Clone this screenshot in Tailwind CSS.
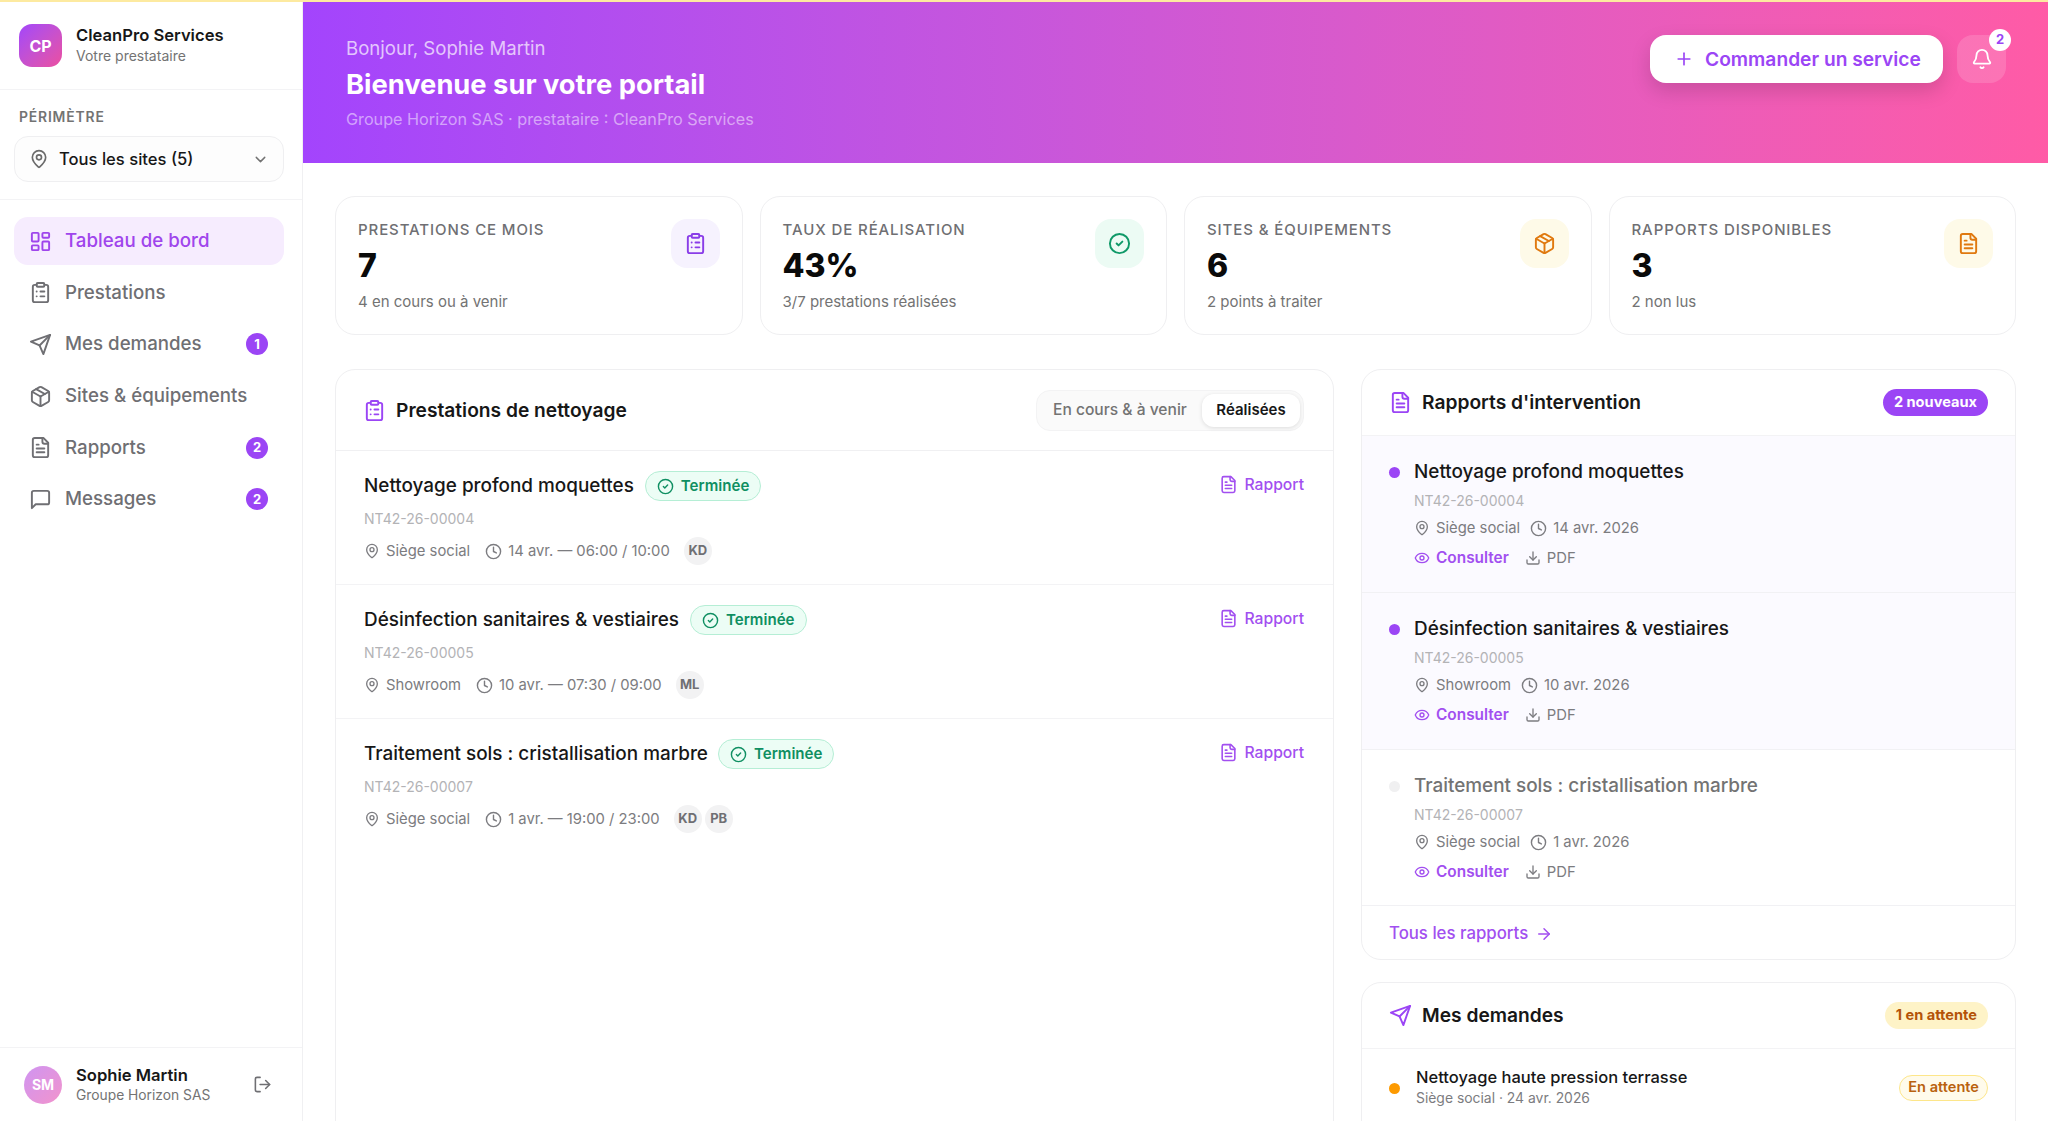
<!DOCTYPE html>
<html lang="fr">
<head>
  <meta charset="UTF-8" />
  <title>CleanPro Services | Portail client</title>
  <script src="https://cdn.jsdelivr.net/npm/@tailwindcss/browser@4"></script>
</head>
<body class="h-screen overflow-hidden bg-white font-[family-name:Inter,sans-serif] text-[#171717] flex flex-col">

  <!-- Icons -->
  <svg class="hidden">
    <symbol id="i-dashboard" viewBox="0 0 24 24" fill="none" stroke="currentColor" stroke-width="2" stroke-linecap="round" stroke-linejoin="round"><rect width="7" height="9" x="3" y="3" rx="1"/><rect width="7" height="5" x="14" y="3" rx="1"/><rect width="7" height="9" x="14" y="12" rx="1"/><rect width="7" height="5" x="3" y="16" rx="1"/></symbol>
    <symbol id="i-clipboard" viewBox="0 0 24 24" fill="none" stroke="currentColor" stroke-width="2" stroke-linecap="round" stroke-linejoin="round"><rect width="8" height="4" x="8" y="2" rx="1"/><path d="M16 4h2a2 2 0 0 1 2 2v14a2 2 0 0 1-2 2H6a2 2 0 0 1-2-2V6a2 2 0 0 1 2-2h2"/><path d="M12 11h4"/><path d="M12 16h4"/><path d="M8 11h.01"/><path d="M8 16h.01"/></symbol>
    <symbol id="i-send" viewBox="0 0 24 24" fill="none" stroke="currentColor" stroke-width="2" stroke-linecap="round" stroke-linejoin="round"><path d="m22 2-7 20-4-9-9-4Z"/><path d="M22 2 11 13"/></symbol>
    <symbol id="i-package" viewBox="0 0 24 24" fill="none" stroke="currentColor" stroke-width="2" stroke-linecap="round" stroke-linejoin="round"><path d="m7.5 4.27 9 5.15"/><path d="M21 8a2 2 0 0 0-1-1.73l-7-4a2 2 0 0 0-2 0l-7 4A2 2 0 0 0 3 8v8a2 2 0 0 0 1 1.73l7 4a2 2 0 0 0 2 0l7-4A2 2 0 0 0 21 16Z"/><path d="m3.3 7 8.7 5 8.7-5"/><path d="M12 22V12"/></symbol>
    <symbol id="i-file" viewBox="0 0 24 24" fill="none" stroke="currentColor" stroke-width="2" stroke-linecap="round" stroke-linejoin="round"><path d="M15 2H6a2 2 0 0 0-2 2v16a2 2 0 0 0 2 2h12a2 2 0 0 0 2-2V7Z"/><path d="M14 2v4a2 2 0 0 0 2 2h4"/><path d="M10 9H8"/><path d="M16 13H8"/><path d="M16 17H8"/></symbol>
    <symbol id="i-message" viewBox="0 0 24 24" fill="none" stroke="currentColor" stroke-width="2" stroke-linecap="round" stroke-linejoin="round"><path d="M21 15a2 2 0 0 1-2 2H7l-4 4V5a2 2 0 0 1 2-2h14a2 2 0 0 1 2 2z"/></symbol>
    <symbol id="i-pin" viewBox="0 0 24 24" fill="none" stroke="currentColor" stroke-width="2" stroke-linecap="round" stroke-linejoin="round"><path d="M20 10c0 4.993-5.539 10.193-7.399 11.799a1 1 0 0 1-1.202 0C9.539 20.193 4 14.993 4 10a8 8 0 0 1 16 0"/><circle cx="12" cy="10" r="3"/></symbol>
    <symbol id="i-chevron" viewBox="0 0 24 24" fill="none" stroke="currentColor" stroke-width="2" stroke-linecap="round" stroke-linejoin="round"><path d="m6 9 6 6 6-6"/></symbol>
    <symbol id="i-plus" viewBox="0 0 24 24" fill="none" stroke="currentColor" stroke-width="2" stroke-linecap="round" stroke-linejoin="round"><path d="M5 12h14"/><path d="M12 5v14"/></symbol>
    <symbol id="i-bell" viewBox="0 0 24 24" fill="none" stroke="currentColor" stroke-width="2" stroke-linecap="round" stroke-linejoin="round"><path d="M10.268 21a2 2 0 0 0 3.464 0"/><path d="M3.262 15.326A1 1 0 0 0 4 17h16a1 1 0 0 0 .74-1.673C19.41 13.956 18 12.499 18 8A6 6 0 0 0 6 8c0 4.499-1.411 5.956-2.738 7.326"/></symbol>
    <symbol id="i-check" viewBox="0 0 24 24" fill="none" stroke="currentColor" stroke-width="2" stroke-linecap="round" stroke-linejoin="round"><circle cx="12" cy="12" r="10"/><path d="m9 12 2 2 4-4"/></symbol>
    <symbol id="i-clock" viewBox="0 0 24 24" fill="none" stroke="currentColor" stroke-width="2" stroke-linecap="round" stroke-linejoin="round"><circle cx="12" cy="12" r="10"/><polyline points="12 6 12 12 16 14"/></symbol>
    <symbol id="i-eye" viewBox="0 0 24 24" fill="none" stroke="currentColor" stroke-width="2" stroke-linecap="round" stroke-linejoin="round"><path d="M2.062 12.348a1 1 0 0 1 0-.696 10.75 10.75 0 0 1 19.876 0 1 1 0 0 1 0 .696 10.75 10.75 0 0 1-19.876 0"/><circle cx="12" cy="12" r="3"/></symbol>
    <symbol id="i-download" viewBox="0 0 24 24" fill="none" stroke="currentColor" stroke-width="2" stroke-linecap="round" stroke-linejoin="round"><path d="M21 15v4a2 2 0 0 1-2 2H5a2 2 0 0 1-2-2v-4"/><polyline points="7 10 12 15 17 10"/><line x1="12" x2="12" y1="15" y2="3"/></symbol>
    <symbol id="i-arrow" viewBox="0 0 24 24" fill="none" stroke="currentColor" stroke-width="2" stroke-linecap="round" stroke-linejoin="round"><path d="M5 12h14"/><path d="m12 5 7 7-7 7"/></symbol>
    <symbol id="i-logout" viewBox="0 0 24 24" fill="none" stroke="currentColor" stroke-width="2" stroke-linecap="round" stroke-linejoin="round"><path d="M9 21H5a2 2 0 0 1-2-2V5a2 2 0 0 1 2-2h4"/><polyline points="16 17 21 12 16 7"/><line x1="21" x2="9" y1="12" y2="12"/></symbol>
  </svg>

  <!-- Top strip -->
  <div class="h-[2px] shrink-0 bg-[#fdeaa0]"></div>

  <div class="flex flex-1 min-h-0">

    <!-- Sidebar -->
    <aside class="w-[303px] shrink-0 border-r border-[#f0f0f2] flex flex-col">
      <div class="h-[88px] shrink-0 border-b border-[#f3f3f5] pl-[19px] pt-[22px] flex items-start gap-[14px]">
        <div class="w-[43px] h-[43px] rounded-[13px] bg-linear-to-br from-[#a344fb] to-[#ec4d9f] flex items-center justify-center text-white font-bold text-[16px]">CP</div>
        <div>
          <div class="text-[16.6px] leading-[22px] font-semibold">CleanPro Services</div>
          <div class="text-[14px] leading-[20px] text-[#737373]">Votre prestataire</div>
        </div>
      </div>

      <div class="h-[110px] shrink-0 border-b border-[#f3f3f5] pl-[14px] pr-[18px] pt-[18px]">
        <div class="px-[5px] text-[13.9px] leading-[18px] font-semibold tracking-[0.06em] text-[#737373]">PÉRIMÈTRE</div>
        <div class="mt-[10px] h-[46px] rounded-[14px] border border-[#efeff1] bg-[#fdfdfd] pl-[14px] pr-[14px] flex items-center text-[16.6px] font-medium">
          <svg class="w-[20px] h-[20px] text-[#6b6b6b]"><use href="#i-pin"/></svg>
          <span class="ml-[10px] flex-1">Tous les sites (5)</span>
          <svg class="w-[17px] h-[17px] text-[#737373]"><use href="#i-chevron"/></svg>
        </div>
      </div>

      <nav class="flex-1 pl-[14px] pr-[18px] pt-[17px] flex flex-col gap-[3.7px] text-[18.7px] font-medium text-[#6f6f73]">
        <a class="h-[48px] rounded-[14px] bg-[#f6ecfe] text-[#9f45ec] pl-[15px] flex items-center gap-[13px]">
          <svg class="w-[23px] h-[23px]"><use href="#i-dashboard"/></svg>Tableau de bord
        </a>
        <a class="h-[48px] pl-[15px] pr-[16px] flex items-center gap-[13px]">
          <svg class="w-[23px] h-[23px]"><use href="#i-clipboard"/></svg>Prestations
        </a>
        <a class="h-[48px] pl-[15px] pr-[16px] flex items-center gap-[13px]">
          <svg class="w-[23px] h-[23px]"><use href="#i-send"/></svg><span class="flex-1">Mes demandes</span>
          <span class="w-[22px] h-[22px] rounded-full bg-[#9b45f5] text-white text-[13px] font-bold flex items-center justify-center">1</span>
        </a>
        <a class="h-[48px] pl-[15px] pr-[16px] flex items-center gap-[13px]">
          <svg class="w-[23px] h-[23px]"><use href="#i-package"/></svg>Sites &amp; équipements
        </a>
        <a class="h-[48px] pl-[15px] pr-[16px] flex items-center gap-[13px]">
          <svg class="w-[23px] h-[23px]"><use href="#i-file"/></svg><span class="flex-1">Rapports</span>
          <span class="w-[22px] h-[22px] rounded-full bg-[#9b45f5] text-white text-[13px] font-bold flex items-center justify-center">2</span>
        </a>
        <a class="h-[48px] pl-[15px] pr-[16px] flex items-center gap-[13px]">
          <svg class="w-[23px] h-[23px]"><use href="#i-message"/></svg><span class="flex-1">Messages</span>
          <span class="w-[22px] h-[22px] rounded-full bg-[#9b45f5] text-white text-[13px] font-bold flex items-center justify-center">2</span>
        </a>
      </nav>

      <div class="h-[74px] shrink-0 border-t border-[#f3f3f5] pl-[24px] pr-[30px] flex items-center">
        <div class="w-[38px] h-[38px] rounded-full bg-linear-to-br from-[#cf94f2] to-[#f293cb] text-white font-bold text-[14px] flex items-center justify-center">SM</div>
        <div class="ml-[14px] flex-1">
          <div class="text-[16.6px] leading-[21px] font-semibold">Sophie Martin</div>
          <div class="text-[13.8px] leading-[18px] text-[#737373]">Groupe Horizon SAS</div>
        </div>
        <svg class="w-[19px] h-[19px] text-[#6f6f73]"><use href="#i-logout"/></svg>
      </div>
    </aside>

    <!-- Main -->
    <main class="flex-1 min-w-0 overflow-hidden">
      <header class="h-[161px] -ml-px bg-linear-to-r from-[#a344fd] to-[#ff5ba6] pl-[44px] pr-[42px] flex items-start justify-between">
        <div class="pt-[33px]">
          <div class="text-[18.6px] leading-[26px] text-white/70">Bonjour, Sophie Martin</div>
          <h1 class="mt-[6px] text-[27.3px] leading-[36px] font-bold text-white">Bienvenue sur votre portail</h1>
          <div class="mt-[5px] text-[16.2px] leading-[22px] text-white/50">Groupe Horizon SAS · prestataire : CleanPro Services</div>
        </div>
        <div class="pt-[33px] flex items-center gap-[14px]">
          <button class="h-[48px] w-[293px] pl-[24px] rounded-[16px] bg-white text-[#9b45f5] shadow-[0_8px_20px_rgba(0,0,0,0.15)] text-[19.2px] font-semibold flex items-center gap-[11px]">
            <svg class="w-[20px] h-[20px]"><use href="#i-plus"/></svg>Commander un service
          </button>
          <div class="relative w-[49px] h-[48px] rounded-[16px] bg-white/15 flex items-center justify-center text-white">
            <svg class="w-[22px] h-[22px]"><use href="#i-bell"/></svg>
            <span class="absolute -top-[6px] -right-[5px] w-[22px] h-[22px] rounded-full bg-white text-[#9b45f5] text-[13px] font-bold flex items-center justify-center">2</span>
          </div>
        </div>
      </header>

      <div class="pl-[32px] pr-[32px] pt-[33px]">
        <!-- Stats -->
        <section class="grid grid-cols-4 gap-[17px]">
          <div class="h-[139px] rounded-[20px] border border-[#efeff1] pl-[22px] pr-[22px] pt-[22px] flex justify-between">
            <div>
              <div class="text-[15px] leading-[22px] font-medium tracking-[0.06em] text-[#6f6f73]">PRESTATIONS CE MOIS</div>
              <div class="mt-[3px] text-[32px] leading-[44px] font-extrabold text-[#0a0a0a]">7</div>
              <div class="mt-[3px] text-[15px] leading-[22px] text-[#737373]">4 en cours ou à venir</div>
            </div>
            <div class="w-[49px] h-[49px] rounded-[16px] bg-[#f6f2fe] text-[#8a3de8] flex items-center justify-center"><svg class="w-[23px] h-[23px]"><use href="#i-clipboard"/></svg></div>
          </div>
          <div class="h-[139px] rounded-[20px] border border-[#efeff1] pl-[22px] pr-[22px] pt-[22px] flex justify-between">
            <div>
              <div class="text-[15px] leading-[22px] font-medium tracking-[0.06em] text-[#6f6f73]">TAUX DE RÉALISATION</div>
              <div class="mt-[3px] text-[32px] leading-[44px] font-extrabold text-[#0a0a0a]">43%</div>
              <div class="mt-[3px] text-[15px] leading-[22px] text-[#737373]">3/7 prestations réalisées</div>
            </div>
            <div class="w-[49px] h-[49px] rounded-[16px] bg-[#ecfbf4] text-[#0f9968] flex items-center justify-center"><svg class="w-[23px] h-[23px]"><use href="#i-check"/></svg></div>
          </div>
          <div class="h-[139px] rounded-[20px] border border-[#efeff1] pl-[22px] pr-[22px] pt-[22px] flex justify-between">
            <div>
              <div class="text-[15px] leading-[22px] font-medium tracking-[0.06em] text-[#6f6f73]">SITES &amp; ÉQUIPEMENTS</div>
              <div class="mt-[3px] text-[32px] leading-[44px] font-extrabold text-[#0a0a0a]">6</div>
              <div class="mt-[3px] text-[15px] leading-[22px] text-[#737373]">2 points à traiter</div>
            </div>
            <div class="w-[49px] h-[49px] rounded-[16px] bg-[#fefae8] text-[#e0790f] flex items-center justify-center"><svg class="w-[23px] h-[23px]"><use href="#i-package"/></svg></div>
          </div>
          <div class="h-[139px] rounded-[20px] border border-[#efeff1] pl-[22px] pr-[22px] pt-[22px] flex justify-between">
            <div>
              <div class="text-[15px] leading-[22px] font-medium tracking-[0.06em] text-[#6f6f73]">RAPPORTS DISPONIBLES</div>
              <div class="mt-[3px] text-[32px] leading-[44px] font-extrabold text-[#0a0a0a]">3</div>
              <div class="mt-[3px] text-[15px] leading-[22px] text-[#737373]">2 non lus</div>
            </div>
            <div class="w-[49px] h-[49px] rounded-[16px] bg-[#fefae8] text-[#e0790f] flex items-center justify-center"><svg class="w-[23px] h-[23px]"><use href="#i-file"/></svg></div>
          </div>
        </section>

        <div class="mt-[34px] grid grid-cols-[999px_655px] gap-[27px] items-start">

          <!-- Prestations -->
          <section class="h-[900px] rounded-[20px] border border-[#efeff1]">
            <div class="h-[81px] border-b border-[#f0f0f2] pl-[27px] pr-[29px] flex items-center">
              <svg class="w-[23px] h-[23px] text-[#9b45f5]"><use href="#i-clipboard"/></svg>
              <h2 class="ml-[10px] flex-1 text-[19.2px] font-semibold">Prestations de nettoyage</h2>
              <div class="h-[41px] w-[268px] rounded-[14px] bg-[#fafafa] border border-[#f3f3f4] pl-[16px] pr-[3px] flex items-center justify-between text-[15.6px] font-medium">
                <span class="text-[#737373]">En cours &amp; à venir</span>
                <span class="h-[33px] w-[98px] rounded-[12px] bg-white shadow-[0_1px_4px_rgba(0,0,0,0.12)] text-[15px] font-semibold flex items-center justify-center">Réalisées</span>
              </div>
            </div>

            <div class="h-[134px] border-b border-[#f3f3f5] pl-[28px] pr-[29px] pt-[20px] flex items-start justify-between">
              <div>
                <div class="flex items-center gap-[11px]">
                  <span class="text-[18.9px] leading-[30px] font-medium">Nettoyage profond moquettes</span>
                  <span class="h-[30px] px-[11px] rounded-full border border-[#b5eed5] bg-[#ecfdf5] text-[#0f8f62] text-[15.1px] font-semibold flex items-center gap-[7px]"><svg class="w-[17px] h-[17px]"><use href="#i-check"/></svg>Terminée</span>
                </div>
                <div class="mt-[8px] text-[14px] leading-[20px] text-[#b3b3b6]">NT42-26-00004</div>
                <div class="mt-[8px] flex items-center text-[14.8px] text-[#7c7c80]">
                  <svg class="w-[16px] h-[16px]"><use href="#i-pin"/></svg><span class="ml-[6px]">Siège social</span>
                  <svg class="ml-[15px] w-[17px] h-[17px]"><use href="#i-clock"/></svg><span class="ml-[6px]">14 avr. — 06:00 / 10:00</span>
                  <span class="ml-[14px] w-[28px] h-[28px] rounded-full bg-[#f2f2f3] text-[#6f6f73] text-[13px] font-bold flex items-center justify-center">KD</span>
                </div>
              </div>
              <a class="mt-[2px] flex items-center gap-[6px] text-[15.7px] font-medium text-[#a24ff0]"><svg class="w-[19px] h-[19px]"><use href="#i-file"/></svg>Rapport</a>
            </div>

            <div class="h-[134px] border-b border-[#f3f3f5] pl-[28px] pr-[29px] pt-[20px] flex items-start justify-between">
              <div>
                <div class="flex items-center gap-[11px]">
                  <span class="text-[18.9px] leading-[30px] font-medium">Désinfection sanitaires &amp; vestiaires</span>
                  <span class="h-[30px] px-[11px] rounded-full border border-[#b5eed5] bg-[#ecfdf5] text-[#0f8f62] text-[15.1px] font-semibold flex items-center gap-[7px]"><svg class="w-[17px] h-[17px]"><use href="#i-check"/></svg>Terminée</span>
                </div>
                <div class="mt-[8px] text-[14px] leading-[20px] text-[#b3b3b6]">NT42-26-00005</div>
                <div class="mt-[8px] flex items-center text-[14.8px] text-[#7c7c80]">
                  <svg class="w-[16px] h-[16px]"><use href="#i-pin"/></svg><span class="ml-[6px]">Showroom</span>
                  <svg class="ml-[15px] w-[17px] h-[17px]"><use href="#i-clock"/></svg><span class="ml-[6px]">10 avr. — 07:30 / 09:00</span>
                  <span class="ml-[14px] w-[28px] h-[28px] rounded-full bg-[#f2f2f3] text-[#6f6f73] text-[13px] font-bold flex items-center justify-center">ML</span>
                </div>
              </div>
              <a class="mt-[2px] flex items-center gap-[6px] text-[15.7px] font-medium text-[#a24ff0]"><svg class="w-[19px] h-[19px]"><use href="#i-file"/></svg>Rapport</a>
            </div>

            <div class="h-[134px] pl-[28px] pr-[29px] pt-[20px] flex items-start justify-between">
              <div>
                <div class="flex items-center gap-[10px]">
                  <span class="text-[18.9px] leading-[30px] font-medium">Traitement sols : cristallisation marbre</span>
                  <span class="h-[30px] px-[11px] rounded-full border border-[#b5eed5] bg-[#ecfdf5] text-[#0f8f62] text-[15.1px] font-semibold flex items-center gap-[7px]"><svg class="w-[17px] h-[17px]"><use href="#i-check"/></svg>Terminée</span>
                </div>
                <div class="mt-[8px] text-[14px] leading-[20px] text-[#b3b3b6]">NT42-26-00007</div>
                <div class="mt-[8px] flex items-center text-[14.8px] text-[#7c7c80]">
                  <svg class="w-[16px] h-[16px]"><use href="#i-pin"/></svg><span class="ml-[6px]">Siège social</span>
                  <svg class="ml-[15px] w-[17px] h-[17px]"><use href="#i-clock"/></svg><span class="ml-[6px]">1 avr. — 19:00 / 23:00</span>
                  <span class="ml-[14px] w-[28px] h-[28px] rounded-full bg-[#f2f2f3] text-[#6f6f73] text-[13px] font-bold flex items-center justify-center">KD</span>
                  <span class="ml-[3px] w-[28px] h-[28px] rounded-full bg-[#f2f2f3] text-[#6f6f73] text-[13px] font-bold flex items-center justify-center">PB</span>
                </div>
              </div>
              <a class="mt-[2px] flex items-center gap-[6px] text-[15.7px] font-medium text-[#a24ff0]"><svg class="w-[19px] h-[19px]"><use href="#i-file"/></svg>Rapport</a>
            </div>
          </section>

          <div class="flex flex-col gap-[22px]">
            <!-- Rapports -->
            <section class="rounded-[20px] border border-[#efeff1] overflow-hidden">
              <div class="h-[66px] border-b border-[#f3f3f5] pl-[27px] pr-[27px] flex items-center">
                <svg class="w-[23px] h-[23px] text-[#9b45f5]"><use href="#i-file"/></svg>
                <h2 class="ml-[10px] flex-1 text-[19.2px] font-semibold">Rapports d'intervention</h2>
                <span class="h-[27px] px-[11px] rounded-full bg-[#9b45f5] text-white text-[14.6px] font-bold flex items-center">2 nouveaux</span>
              </div>

              <div class="h-[157px] bg-[#fbfaff] border-b border-[#f1f1f4] pl-[27px] pt-[24px]">
                <div class="flex items-center gap-[14px] text-[18.9px] leading-[24px] font-medium"><span class="w-[11px] h-[11px] rounded-full bg-[#9b45f5]"></span>Nettoyage profond moquettes</div>
                <div class="ml-[25px] mt-[7px] text-[14px] leading-[20px] text-[#b3b3b6]">NT42-26-00004</div>
                <div class="ml-[25px] mt-[7px] flex items-center text-[14.8px] leading-[20px] text-[#7c7c80]">
                  <svg class="w-[16px] h-[16px]"><use href="#i-pin"/></svg><span class="ml-[6px]">Siège social</span>
                  <svg class="ml-[10px] w-[17px] h-[17px]"><use href="#i-clock"/></svg><span class="ml-[6px]">14 avr. 2026</span>
                </div>
                <div class="ml-[25px] mt-[10px] flex items-center text-[14.8px] leading-[20px]">
                  <svg class="w-[16px] h-[16px] text-[#a24ff0]"><use href="#i-eye"/></svg><span class="ml-[6px] text-[15.4px] font-semibold text-[#a24ff0]">Consulter</span>
                  <svg class="ml-[16px] w-[16px] h-[16px] text-[#7c7c80]"><use href="#i-download"/></svg><span class="ml-[6px] text-[#7c7c80]">PDF</span>
                </div>
              </div>

              <div class="h-[157px] bg-[#fbfaff] border-b border-[#f1f1f4] pl-[27px] pt-[24px]">
                <div class="flex items-center gap-[14px] text-[18.9px] leading-[24px] font-medium"><span class="w-[11px] h-[11px] rounded-full bg-[#9b45f5]"></span>Désinfection sanitaires &amp; vestiaires</div>
                <div class="ml-[25px] mt-[7px] text-[14px] leading-[20px] text-[#b3b3b6]">NT42-26-00005</div>
                <div class="ml-[25px] mt-[7px] flex items-center text-[14.8px] leading-[20px] text-[#7c7c80]">
                  <svg class="w-[16px] h-[16px]"><use href="#i-pin"/></svg><span class="ml-[6px]">Showroom</span>
                  <svg class="ml-[10px] w-[17px] h-[17px]"><use href="#i-clock"/></svg><span class="ml-[6px]">10 avr. 2026</span>
                </div>
                <div class="ml-[25px] mt-[10px] flex items-center text-[14.8px] leading-[20px]">
                  <svg class="w-[16px] h-[16px] text-[#a24ff0]"><use href="#i-eye"/></svg><span class="ml-[6px] text-[15.4px] font-semibold text-[#a24ff0]">Consulter</span>
                  <svg class="ml-[16px] w-[16px] h-[16px] text-[#7c7c80]"><use href="#i-download"/></svg><span class="ml-[6px] text-[#7c7c80]">PDF</span>
                </div>
              </div>

              <div class="h-[156px] border-b border-[#f1f1f4] pl-[27px] pt-[24px]">
                <div class="flex items-center gap-[14px] text-[18.9px] leading-[24px] font-medium text-[#737373]"><span class="w-[11px] h-[11px] rounded-full bg-[#f0f0f1]"></span>Traitement sols : cristallisation marbre</div>
                <div class="ml-[25px] mt-[7px] text-[14px] leading-[20px] text-[#b3b3b6]">NT42-26-00007</div>
                <div class="ml-[25px] mt-[7px] flex items-center text-[14.8px] leading-[20px] text-[#7c7c80]">
                  <svg class="w-[16px] h-[16px]"><use href="#i-pin"/></svg><span class="ml-[6px]">Siège social</span>
                  <svg class="ml-[10px] w-[17px] h-[17px]"><use href="#i-clock"/></svg><span class="ml-[6px]">1 avr. 2026</span>
                </div>
                <div class="ml-[25px] mt-[10px] flex items-center text-[14.8px] leading-[20px]">
                  <svg class="w-[16px] h-[16px] text-[#a24ff0]"><use href="#i-eye"/></svg><span class="ml-[6px] text-[15.4px] font-semibold text-[#a24ff0]">Consulter</span>
                  <svg class="ml-[16px] w-[16px] h-[16px] text-[#7c7c80]"><use href="#i-download"/></svg><span class="ml-[6px] text-[#7c7c80]">PDF</span>
                </div>
              </div>

              <a class="h-[53px] pl-[27px] pt-[2px] flex items-center gap-[7px] text-[16.8px] font-medium text-[#a24ff0]">Tous les rapports<svg class="w-[18px] h-[18px]"><use href="#i-arrow"/></svg></a>
            </section>

            <!-- Mes demandes -->
            <section class="rounded-[20px] border border-[#efeff1]">
              <div class="h-[66px] border-b border-[#f3f3f5] pl-[27px] pr-[27px] flex items-center">
                <svg class="w-[23px] h-[23px] text-[#9b45f5]"><use href="#i-send"/></svg>
                <h2 class="ml-[10px] flex-1 text-[19.2px] font-semibold">Mes demandes</h2>
                <span class="h-[27px] px-[11px] rounded-full bg-[#fef3c7] text-[#b45309] text-[14.6px] font-bold flex items-center">1 en attente</span>
              </div>
              <div class="h-[100px] pl-[27px] pr-[27px] pt-[17px] flex items-start">
                <span class="mt-[17px] w-[11px] h-[11px] rounded-full bg-[#fd9a00]"></span>
                <div class="ml-[16px] flex-1">
                  <div class="text-[16.5px] leading-[22px] font-medium">Nettoyage haute pression terrasse</div>
                  <div class="text-[13.9px] leading-[20px] text-[#7c7c80]">Siège social · 24 avr. 2026</div>
                </div>
                <span class="mt-[9px] h-[26px] px-[8px] rounded-full border border-[#fde68a] bg-[#fffbeb] text-[#b9620f] text-[14.6px] font-semibold flex items-center">En attente</span>
              </div>
            </section>
          </div>
        </div>
      </div>
    </main>
  </div>
</body>
</html>
